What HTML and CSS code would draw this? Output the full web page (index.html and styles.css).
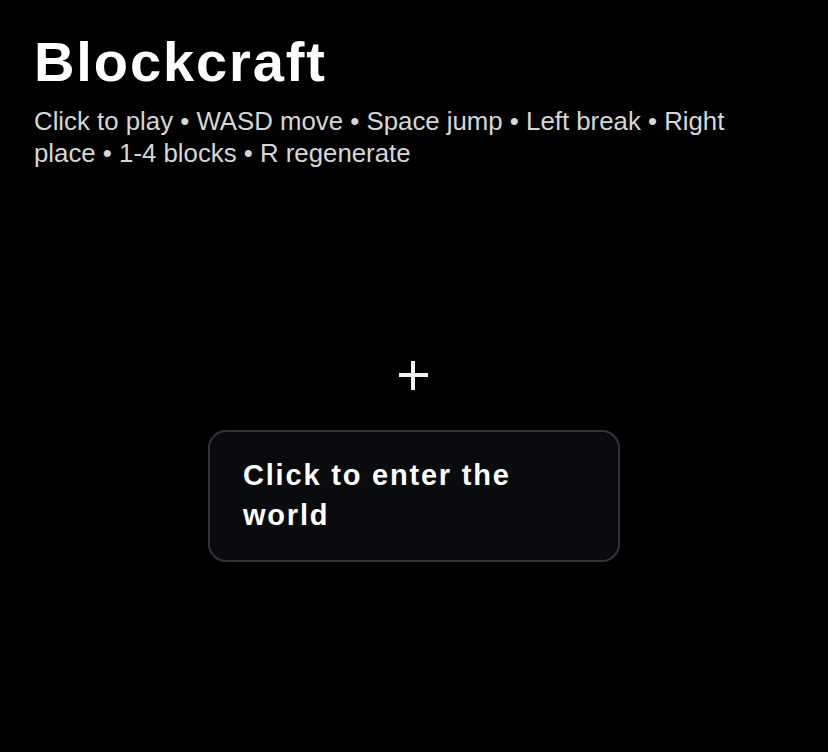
FILE: index.html
```html
<!DOCTYPE html>
<html lang="en">
<head>
<meta charset="utf-8">
<title>Blockcraft</title>
<link rel="stylesheet" href="styles.css">
</head>
<body>
<div class="app">
  <header class="hud">
    <h1 class="title">Blockcraft</h1>
    <p class="help">Click to play • WASD move • Space jump • Left break • Right place • 1-4 blocks • R regenerate</p>
  </header>
  <div class="crosshair" aria-hidden="true"></div>
  <div class="overlay">
    <div class="card">Click to enter the world</div>
  </div>
</div>
</body>
</html>
```
FILE: styles.css
```css
html, body {
  margin: 0;
  padding: 0;
  background: #000;
  height: 100%;
}
body {
  font-family: "Liberation Sans", Arial, sans-serif;
  color: #fff;
}
.app {
  position: relative;
  height: 100vh;
  overflow: hidden;
}
.hud {
  padding: 30px 34px 0 34px;
  max-width: 705px;
}
.title {
  margin: 0;
  font-size: 56px;
  line-height: 64px;
  font-weight: 700;
  letter-spacing: 1.9px;
  color: #fff;
}
.help {
  margin: 11px 0 0 0;
  font-size: 25.8px;
  line-height: 32px;
  color: #d6d6d6;
}
.crosshair {
  position: absolute;
  left: 399px;
  top: 361px;
  width: 29px;
  height: 29px;
}
.crosshair::before,
.crosshair::after {
  content: "";
  position: absolute;
  background: #f2f2f2;
}
.crosshair::before {
  left: 0;
  right: 0;
  top: 12px;
  height: 4px;
}
.crosshair::after {
  top: 0;
  bottom: 0;
  left: 12px;
  width: 4px;
}
.overlay {
  position: absolute;
  inset: 0;
  display: flex;
  justify-content: center;
  align-items: flex-start;
  padding-top: 430px;
}
.card {
  box-sizing: border-box;
  width: 412px;
  padding: 23px 34px 25px 33px;
  background: #0a0b0f;
  border: 2px solid #333438;
  border-radius: 18px;
  font-size: 29px;
  line-height: 40px;
  font-weight: 700;
  letter-spacing: 1.8px;
  color: #fff;
}
```
